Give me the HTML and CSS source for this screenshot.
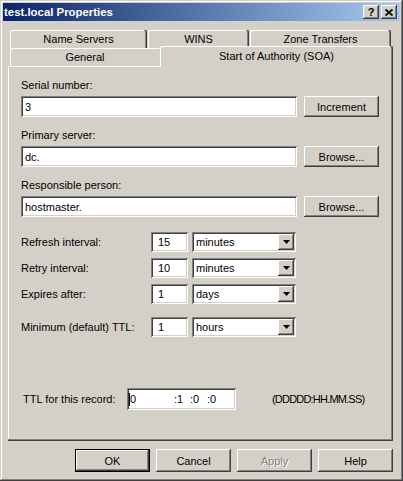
FILE: index.html
```html
<!DOCTYPE html>
<html lang="en">
<head>
  <meta charset="UTF-8">
  <title>test.local Properties</title>
  <link rel="stylesheet" href="styles.css">
</head>
<body>
  <div class="window">
    <!-- Caption -->
    <div class="titlebar">
      <span class="title">test.local Properties</span>
      <div class="caption-buttons">
        <span class="cap-btn">?</span>
        <span class="cap-btn">
          <svg width="8" height="7" viewBox="0 0 8 7"><path d="M0.5 0.5 L7.5 6.5 M7.5 0.5 L0.5 6.5" stroke="#000" stroke-width="1.8"/></svg>
        </span>
      </div>
    </div>

    <div class="client">
      <!-- Tabs -->
      <div class="tabs">
        <div class="tab-row back">
          <div class="tab t-ns">Name Servers</div>
          <div class="tab t-wins">WINS</div>
          <div class="tab t-zt">Zone Transfers</div>
        </div>
        <div class="tab-row front">
          <div class="tab t-general">General</div>
          <div class="tab t-soa">Start of Authority (SOA)</div>
        </div>
      </div>

      <!-- SOA page -->
      <div class="panel">
        <div class="field">
          <div class="field-label">Serial number:</div>
          <div class="field-row">
            <input class="text-input" type="text" value="3">
            <button class="btn btn-side">Increment</button>
          </div>
        </div>
        <div class="field">
          <div class="field-label">Primary server:</div>
          <div class="field-row">
            <input class="text-input" type="text" value="dc.">
            <button class="btn btn-side">Browse...</button>
          </div>
        </div>
        <div class="field">
          <div class="field-label">Responsible person:</div>
          <div class="field-row">
            <input class="text-input" type="text" value="hostmaster.">
            <button class="btn btn-side">Browse...</button>
          </div>
        </div>

        <div class="intervals">
          <div class="interval-row">
            <span class="lbl">Refresh interval:</span>
            <input class="num" type="text" value="15">
            <div class="select"><span>minutes</span><span class="drop"><svg width="7" height="4" viewBox="0 0 7 4"><path d="M0 0h7L3.5 4z"/></svg></span></div>
          </div>
          <div class="interval-row">
            <span class="lbl">Retry interval:</span>
            <input class="num" type="text" value="10">
            <div class="select"><span>minutes</span><span class="drop"><svg width="7" height="4" viewBox="0 0 7 4"><path d="M0 0h7L3.5 4z"/></svg></span></div>
          </div>
          <div class="interval-row">
            <span class="lbl">Expires after:</span>
            <input class="num" type="text" value="1">
            <div class="select"><span>days</span><span class="drop"><svg width="7" height="4" viewBox="0 0 7 4"><path d="M0 0h7L3.5 4z"/></svg></span></div>
          </div>
          <div class="interval-row min">
            <span class="lbl">Minimum (default) TTL:</span>
            <input class="num" type="text" value="1">
            <div class="select"><span>hours</span><span class="drop"><svg width="7" height="4" viewBox="0 0 7 4"><path d="M0 0h7L3.5 4z"/></svg></span></div>
          </div>
        </div>

        <div class="ttl-row">
          <span class="ttl-label">TTL for this record:</span>
          <div class="ttl">
            <span class="caret"></span>
            <span class="d">0</span>
            <span class="h">:1</span>
            <span class="m">:0</span>
            <span>:0</span>
          </div>
          <span class="format">(DDDDD:HH.MM.SS)</span>
        </div>
      </div>

      <!-- Dialog buttons -->
      <div class="actions">
        <button class="btn btn-default">OK</button>
        <button class="btn">Cancel</button>
        <button class="btn" disabled>Apply</button>
        <button class="btn">Help</button>
      </div>
    </div>
  </div>
</body>
</html>
```

FILE: styles.css
```css
body {
  margin: 0;
  background: #d4d0c8;
  font-family: "Liberation Sans", Arial, sans-serif;
  font-size: 11px;
  color: #000;
}

.window {
  width: 403px;
  height: 481px;
  box-sizing: border-box;
  padding: 3px;
  background: #d4d0c8;
  box-shadow: inset -1px -1px #404040, inset 1px 1px #d4d0c8, inset -2px -2px #808080, inset 2px 2px #fff;
}

.titlebar {
  height: 18px;
  display: flex;
  justify-content: space-between;
  align-items: flex-start;
  background: linear-gradient(to right, #0a246a, #a6caf0);
  color: #fff;
}

.title {
  font-weight: bold;
  font-size: 11.4px;
  line-height: 18px;
  padding-left: 1px;
}

.caption-buttons {
  display: flex;
  gap: 2px;
  margin: 2px 3px 0 0;
}

.cap-btn {
  width: 16px;
  height: 14px;
  box-sizing: border-box;
  display: flex;
  align-items: center;
  justify-content: center;
  background: #d4d0c8;
  color: #000;
  font-weight: bold;
  box-shadow: inset -1px -1px #404040, inset 1px 1px #fff, inset -2px -2px #808080;
}

.client {
  padding: 9px 7px 0 5px;
}

/* tabs */
.tabs {
  margin-left: 2px;
}

.tab-row {
  display: flex;
  height: 18px;
}

.back {
  gap: 1px;
}

.tab {
  box-sizing: border-box;
  height: 18px;
  display: flex;
  align-items: center;
  justify-content: center;
  background: #d4d0c8;
  border-radius: 2px 2px 0 0;
  box-shadow: inset -1px 0 #404040, inset -2px 0 #808080, inset 1px 1px #fff;
}

.t-ns { width: 137px; }
.t-wins { width: 101px; }
.t-zt { width: 141px; }

.t-general {
  width: 150px;
  box-shadow: inset 1px 1px #fff;
}

.t-soa {
  width: 233px;
  height: 21px;
  margin-top: -2px;
  padding-bottom: 2px;
  position: relative;
  z-index: 1;
}

/* page */
.panel {
  box-sizing: border-box;
  height: 375px;
  padding: 13px 13px 0;
  box-shadow: inset -1px -1px #404040, inset -2px -2px #808080, inset 1px 1px #fff;
}

.field {
  margin-bottom: 12px;
}

.field-label {
  line-height: 13px;
  margin-bottom: 4px;
}

.field-row {
  display: flex;
  gap: 7px;
}

.text-input, .num {
  box-sizing: border-box;
  border: none;
  margin: 0;
  font: inherit;
  color: #000;
  background: #fff;
  outline: none;
  box-shadow: inset 1px 1px #808080, inset -1px -1px #fff, inset 2px 2px #404040, inset -2px -2px #d4d0c8;
}

.text-input {
  width: 276px;
  height: 21px;
  padding: 0 4px;
}

.btn {
  width: 75px;
  height: 23px;
  box-sizing: border-box;
  border: none;
  padding: 0;
  font: inherit;
  color: #000;
  background: #d4d0c8;
  box-shadow: inset -1px -1px #404040, inset 1px 1px #fff, inset -2px -2px #808080;
}

.btn-side {
  height: 21px;
}

.btn-default {
  border: 1px solid #000;
}

.btn:disabled {
  color: #808080;
  text-shadow: 1px 1px #fff;
}

.intervals {
  margin-top: 15px;
}

.interval-row {
  display: flex;
  align-items: center;
  height: 20px;
  margin-bottom: 6px;
}

.interval-row.min {
  margin-top: 13px;
}

.lbl {
  width: 130px;
}

.num {
  width: 37px;
  height: 20px;
  padding: 0 0 0 7px;
}

.select {
  width: 104px;
  height: 20px;
  margin-left: 4px;
  box-sizing: border-box;
  padding: 0 2px 0 4px;
  display: flex;
  align-items: center;
  justify-content: space-between;
  background: #fff;
  box-shadow: inset 1px 1px #808080, inset -1px -1px #fff, inset 2px 2px #404040, inset -2px -2px #d4d0c8;
}

.drop {
  width: 16px;
  height: 16px;
  box-sizing: border-box;
  display: flex;
  align-items: center;
  justify-content: center;
  background: #d4d0c8;
  box-shadow: inset -1px -1px #404040, inset 1px 1px #fff, inset -2px -2px #808080;
}

.ttl-row {
  display: flex;
  align-items: center;
  margin-top: 51px;
}

.ttl-label {
  width: 104px;
  margin-left: 2px;
}

.ttl {
  width: 109px;
  height: 22px;
  box-sizing: border-box;
  padding-left: 2px;
  display: flex;
  align-items: center;
  background: #fff;
  box-shadow: inset 1px 1px #808080, inset -1px -1px #fff, inset 2px 2px #404040, inset -2px -2px #d4d0c8;
}

.caret {
  width: 1px;
  height: 13px;
  background: #000;
}

.ttl .d { width: 44px; }
.ttl .h { width: 16px; }
.ttl .m { width: 17px; }

.format {
  margin-left: 36px;
  letter-spacing: -0.8px;
}

.actions {
  display: flex;
  justify-content: flex-end;
  gap: 6px;
  margin-top: 8px;
}
```
